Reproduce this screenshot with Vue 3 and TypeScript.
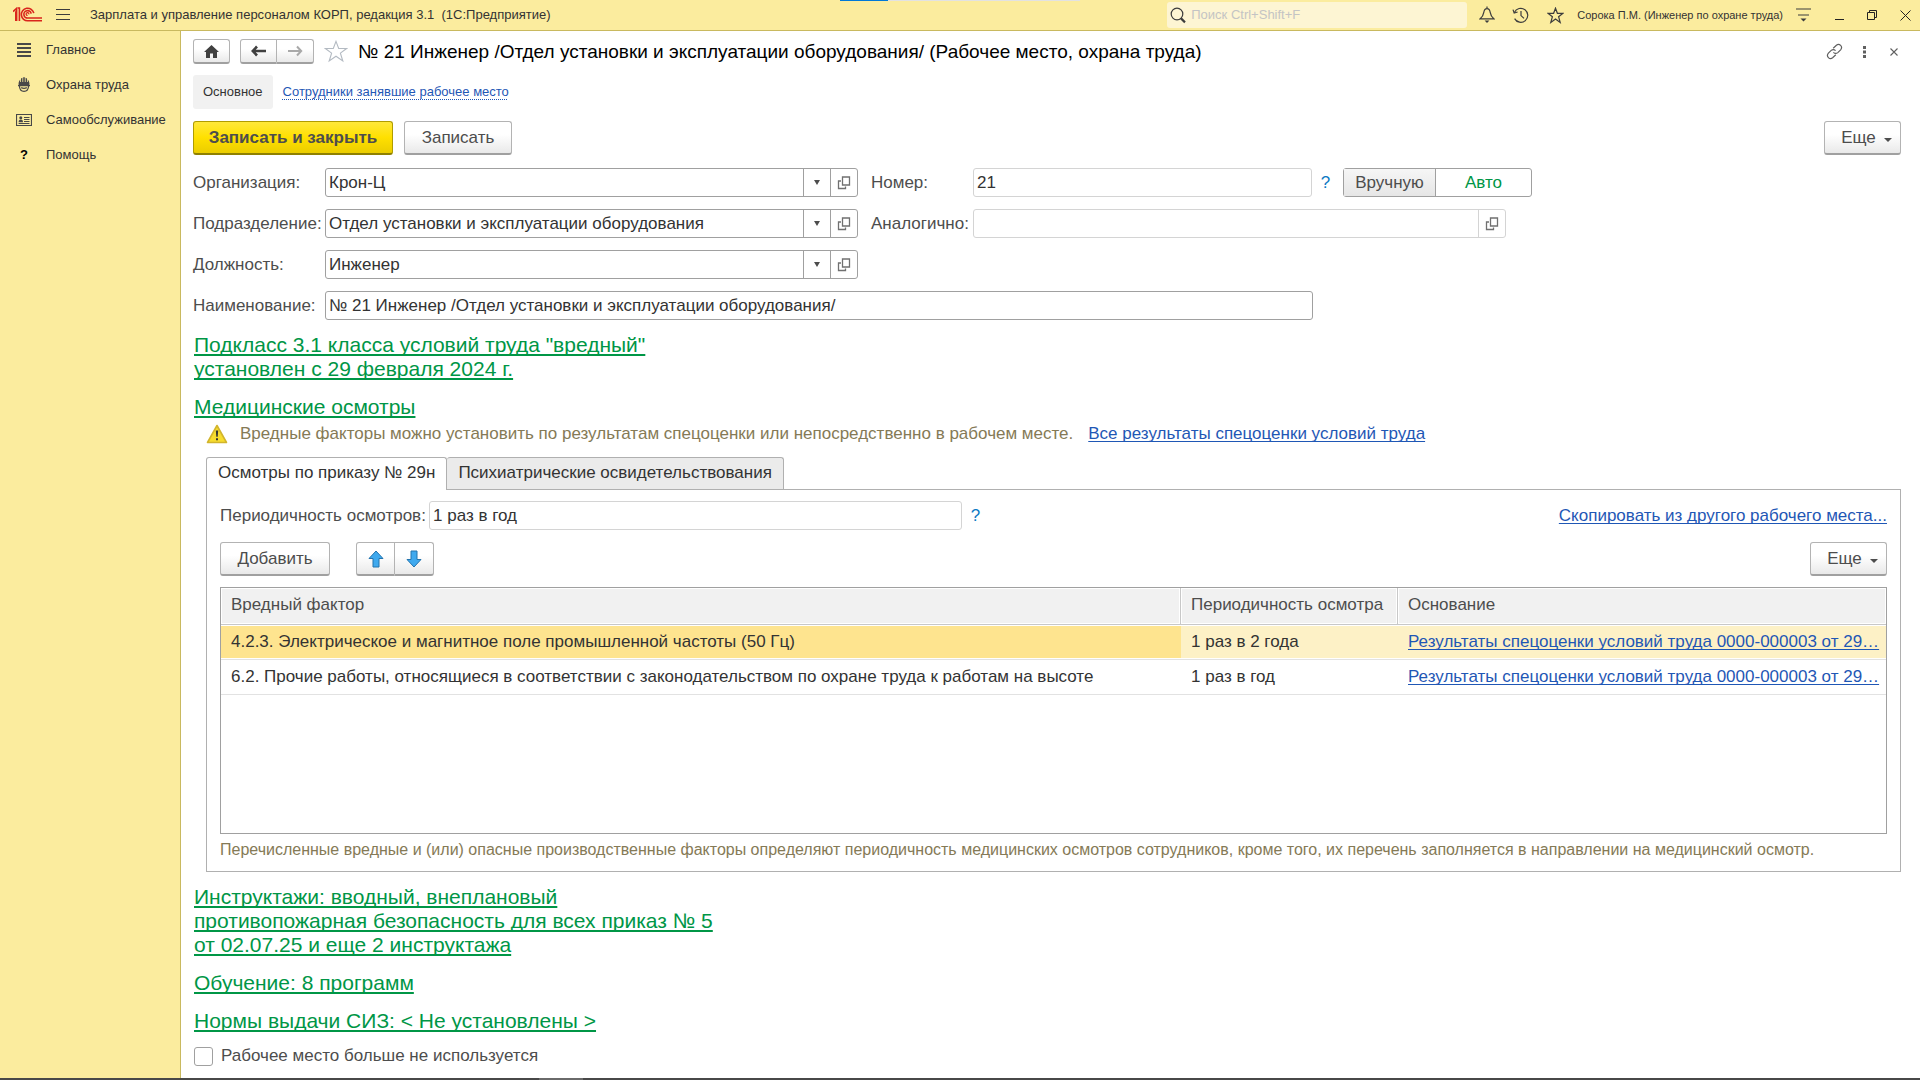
<script setup lang="ts">
import { ref } from 'vue'

interface MenuItem {
  icon: 'list' | 'helmet' | 'card' | 'help'
  title: string
}

interface PickField {
  id: string
  label: string
  value: string
}

interface FactorRow {
  factor: string
  period: string
  basis: string
}

const menu: MenuItem[] = [
  { icon: 'list', title: 'Главное' },
  { icon: 'helmet', title: 'Охрана труда' },
  { icon: 'card', title: 'Самообслуживание' },
  { icon: 'help', title: 'Помощь' },
]

const organization = ref<PickField>({ id: 'org', label: 'Организация:', value: 'Крон-Ц' })
const department = ref<PickField>({ id: 'dep', label: 'Подразделение:', value: 'Отдел установки и эксплуатации оборудования' })
const position = ref<PickField>({ id: 'pos', label: 'Должность:', value: 'Инженер' })
const pickFields = [organization, department, position]

const placeNumber = ref('21')
const sameAs = ref('')
const placeName = ref('№ 21 Инженер /Отдел установки и эксплуатации оборудования/')
const checkPeriod = ref('1 раз в год')
const retired = ref(false)
const selectedRow = ref(0)

const rows: FactorRow[] = [
  {
    factor: '4.2.3. Электрическое и магнитное поле промышленной частоты (50 Гц)',
    period: '1 раз в 2 года',
    basis: 'Результаты спецоценки условий труда 0000-000003 от 29…',
  },
  {
    factor: '6.2. Прочие работы, относящиеся в соответствии с законодательством по охране труда к работам на высоте',
    period: '1 раз в год',
    basis: 'Результаты спецоценки условий труда 0000-000003 от 29…',
  },
]
</script>

<template>
  <div class="app">
    <header class="topbar">
      <div class="progress"><span></span></div>
      <svg class="logo" width="30" height="16" viewBox="0 0 30 16" fill="none" stroke="#d9251c" stroke-width="1.6">
        <path d="M0 4.6 L3.6 1.4 V14 M2 5 H2.8 V14 M6.4 14 V1 H4.8" />
        <path d="M20.8 6.2 A6.3 6.3 0 1 0 15 13.8 H29" />
        <path d="M18.2 6.6 A3.7 3.7 0 1 0 15 11 H29" />
        <path d="M15.8 7.4 A1.4 1.4 0 1 0 14.6 8.4" stroke-width="1.2" />
      </svg>
      <button class="plain burger" aria-label="Меню">
        <svg width="14" height="12" viewBox="0 0 14 12" stroke="#3c3c3c" stroke-width="1"><path d="M0 .5H14M0 5.5H14M0 10.5H14" /></svg>
      </button>
      <span class="app-title">Зарплата и управление персоналом КОРП, редакция 3.1&nbsp; (1С:Предприятие)</span>
      <label class="search">
        <svg width="17" height="17" viewBox="0 0 17 17" fill="none" stroke="#3c3c3c"><circle cx="7" cy="7" r="5.8" stroke-width="1.2" /><path d="M11 11.4L15 15.4" stroke-width="2.2" /></svg>
        <input type="text" placeholder="Поиск Ctrl+Shift+F" aria-label="Поиск" />
      </label>
      <div class="top-tools">
        <button class="plain" aria-label="Уведомления">
          <svg width="16" height="18" viewBox="0 0 16 18" fill="none" stroke="#3c3c3c" stroke-width="1.2"><path d="M1.2 12.8C3.8 10.6 4.4 9 4.8 6.4C5.2 3.8 6.4 2.6 8 2.6S10.8 3.8 11.2 6.4C11.6 9 12.2 10.6 14.8 12.8Z M8 .6V2.6" /><path d="M5.6 14.6H10.4L8 17Z" fill="#3c3c3c" stroke="none" /></svg>
        </button>
        <button class="plain" aria-label="История">
          <svg width="18" height="17" viewBox="0 0 18 17" fill="none" stroke="#3c3c3c" stroke-width="1.2"><path d="M2.4 5.4A7 7 0 1 1 2.6 11.6" /><path d="M1 2.6L2.2 6L5.6 5" /><path d="M9 4V8.6L12 11.4" /></svg>
        </button>
        <button class="plain" aria-label="Избранное">
          <svg width="17" height="17" viewBox="0 0 17 17" fill="none" stroke="#3c3c3c" stroke-width="1.2"><path d="M8.5 1.2L10.4 6.3H16L11.6 9.7L13.2 15.4L8.5 12L3.8 15.4L5.4 9.7L1 6.3H6.6Z" /></svg>
        </button>
        <span class="user">Сорока П.М. (Инженер по охране труда)</span>
        <button class="plain" aria-label="Настройки">
          <svg width="15" height="14" viewBox="0 0 15 14"><path d="M0 1H15M2 7H13" stroke="#3c3c3c" stroke-width="1.2" /><path d="M4.5 10.5H10.5L7.5 13.5Z" fill="#3c3c3c" /></svg>
        </button>
        <button class="plain" aria-label="Свернуть">
          <svg width="10" height="12" viewBox="0 0 10 12"><path d="M1 10.5H10" stroke="#222" /></svg>
        </button>
        <button class="plain" aria-label="Развернуть">
          <svg width="10" height="10" viewBox="0 0 10 10" fill="none" stroke="#222"><path d="M.5 2.5H7.5V9.5H.5ZM2.5 2.5V.5H9.5V7.5H7.5" /></svg>
        </button>
        <button class="plain" aria-label="Закрыть программу">
          <svg width="11" height="11" viewBox="0 0 11 11" stroke="#222"><path d="M.5 .5L10.5 10.5M10.5 .5L.5 10.5" /></svg>
        </button>
      </div>
    </header>

    <div class="body">
      <nav class="sidebar">
        <a v-for="item in menu" :key="item.title" href="#" class="menu-item">
          <svg v-if="item.icon === 'list'" width="16" height="16" viewBox="0 0 16 16"><path d="M1 2H15M1 6H15M1 10H15M1 14H15" stroke="#484848" stroke-width="2" /></svg>
          <svg v-else-if="item.icon === 'helmet'" width="16" height="16" viewBox="0 0 16 16"><path d="M2.6 8.2V6A6 6 0 0 1 4.2 2.4V5H5V1.6L6.4 .8V5H7.2V.2H8.8V5H9.6V.8L11 1.6V5H11.8V2.4A6 6 0 0 1 13.4 6V8.2Z" fill="#484848" /><path d="M3.4 8.8Q3.6 14.4 8 14.4T12.6 8.8M2 8.6H14M5.2 10.6Q8 12 10.8 10.6" fill="none" stroke="#484848" stroke-width="1.2" /></svg>
          <svg v-else-if="item.icon === 'card'" width="16" height="16" viewBox="0 0 16 16"><path d="M.5 2.5H15.5V13.5H.5Z" fill="none" stroke="#484848" stroke-width="1.2" /><circle cx="4.8" cy="5.8" r="1.5" fill="#484848" /><path d="M2.6 10.2Q2.6 7.4 4.8 7.4T7 10.2Z" fill="#484848" /><path d="M8 5.5H13.5M8 7.5H13.5M8 9.5H13.5M2.6 11.5H13.5" stroke="#484848" /></svg>
          <span v-else class="help-icon">?</span>
          <span>{{ item.title }}</span>
        </a>
      </nav>

      <main class="page">
        <div class="nav-row">
          <button class="btn nav-btn" aria-label="Начальная страница">
            <svg width="15" height="13" viewBox="0 0 15 13"><path d="M7.5 0L15 7H13V13H9V8.5H6V13H2V7H0Z" fill="#404040" /></svg>
          </button>
          <div class="btn-pair nav-pair">
            <button class="btn" aria-label="Назад">
              <svg width="15" height="12" viewBox="0 0 15 12"><path d="M6 1.5L1.8 6L6 10.5M2 6H15" fill="none" stroke="#404040" stroke-width="2.6" /></svg>
            </button>
            <button class="btn" aria-label="Вперед">
              <svg width="15" height="12" viewBox="0 0 15 12"><path d="M9 1.5L13.2 6L9 10.5M13 6H0" fill="none" stroke="#a9a9a9" stroke-width="2" /></svg>
            </button>
          </div>
          <button class="plain fav" aria-label="В избранное">
            <svg width="24" height="23" viewBox="0 0 24 23" fill="none" stroke="#b3bac2" stroke-width="1.1"><path d="M12 1.4L14.7 8.5H22.6L16.4 13.1L18.8 21L12 16.2L5.2 21L7.6 13.1L1.4 8.5H9.3Z" /></svg>
          </button>
          <h1>№ 21 Инженер /Отдел установки и эксплуатации оборудования/ (Рабочее место, охрана труда)</h1>
          <div class="page-tools">
            <button class="plain" aria-label="Получить ссылку">
              <svg width="17" height="17" viewBox="0 0 17 17" fill="none" stroke="#606060" stroke-width="1.2"><path d="M7.2 5.2L10.4 2.2Q12.6 .4 14.6 2.4T14.6 6.8L11.8 9.6Q9.6 11.4 7.4 9.4" /><path d="M9.8 11.8L6.6 14.8Q4.4 16.6 2.4 14.6T2.4 10.2L5.2 7.4Q7.4 5.6 9.6 7.6" /></svg>
            </button>
            <button class="plain" aria-label="Еще действия">
              <svg width="3" height="12" viewBox="0 0 3 12" fill="#606060"><path d="M0 0H3V3H0ZM0 4.5H3V7.5H0ZM0 9H3V12H0Z" /></svg>
            </button>
            <button class="plain" aria-label="Закрыть">
              <svg width="8" height="8" viewBox="0 0 8 8" stroke="#606060" stroke-width="1.1"><path d="M.5 .5L7.5 7.5M7.5 .5L.5 7.5" /></svg>
            </button>
          </div>
        </div>

        <div class="sections">
          <a href="#" class="section-current">Основное</a>
          <a href="#" class="section-link">Сотрудники занявшие рабочее место</a>
        </div>

        <div class="commands">
          <button class="btn primary">Записать и закрыть</button>
          <button class="btn save">Записать</button>
          <button class="btn more">Еще <i class="caret"></i></button>
        </div>

        <div class="form">
          <div class="col-left">
            <div v-for="field in pickFields" :key="field.value.id" class="field-row">
              <label :for="field.value.id">{{ field.value.label }}</label>
              <div class="field pick">
                <input :id="field.value.id" v-model="field.value.value" type="text" />
                <button aria-label="Выбрать из списка"><i class="caret"></i></button>
                <button aria-label="Открыть">
                  <svg width="14" height="14" viewBox="0 0 14 14" fill="none" stroke="#707070" stroke-width="1.3"><path d="M5.5 1H12.5V9H5.5ZM4 5H1.5V12.5H8.5V10.5" /></svg>
                </button>
              </div>
            </div>
          </div>
          <div class="col-right">
            <div class="field-row">
              <label for="num">Номер:</label>
              <div class="field soft number"><input id="num" v-model="placeNumber" type="text" /></div>
              <button class="plain hint" aria-label="Подсказка к номеру">?</button>
              <div class="toggle">
                <button class="manual">Вручную</button>
                <button class="auto">Авто</button>
              </div>
            </div>
            <div class="field-row">
              <label for="same">Аналогично:</label>
              <div class="field soft pick">
                <input id="same" v-model="sameAs" type="text" />
                <button aria-label="Открыть">
                  <svg width="14" height="14" viewBox="0 0 14 14" fill="none" stroke="#707070" stroke-width="1.3"><path d="M5.5 1H12.5V9H5.5ZM4 5H1.5V12.5H8.5V10.5" /></svg>
                </button>
              </div>
            </div>
          </div>
        </div>
        <div class="field-row name-row">
          <label for="name">Наименование:</label>
          <div class="field name"><input id="name" v-model="placeName" type="text" /></div>
        </div>

        <a href="#" class="group-link">Подкласс 3.1 класса условий труда "вредный"<br />установлен с 29 февраля 2024 г.</a>
        <a href="#" class="group-link">Медицинские осмотры</a>

        <section class="medical">
          <div class="notice">
            <svg width="22" height="20" viewBox="0 0 22 20"><path d="M11 1.5L20.5 18.5H1.5Z" fill="#f7dc2e" stroke="#d2b52c" stroke-width="1.6" stroke-linejoin="round" /><path d="M9.8 6.5H12.2L11.7 12.8H10.3ZM10 14.2H12V16.2H10Z" fill="#333" /></svg>
            <span>Вредные факторы можно установить по результатам спецоценки или непосредственно в рабочем месте.</span>
            <a href="#" class="link">Все результаты спецоценки условий труда</a>
          </div>

          <div class="tabs">
            <button class="tab active">Осмотры по приказу № 29н</button>
            <button class="tab">Психиатрические освидетельствования</button>
          </div>

          <div class="panel">
            <div class="field-row period-row">
              <label for="period">Периодичность осмотров:</label>
              <div class="field soft period"><input id="period" v-model="checkPeriod" type="text" /></div>
              <button class="plain hint" aria-label="Подсказка к периодичности">?</button>
              <a href="#" class="link copy">Скопировать из другого рабочего места...</a>
            </div>

            <div class="table-commands">
              <button class="btn add">Добавить</button>
              <div class="btn-pair move-pair">
                <button class="btn" aria-label="Переместить вверх">
                  <svg width="16" height="18" viewBox="0 0 16 18"><path d="M8 1L15 8.5H11V17H5V8.5H1Z" fill="#3fa9ee" stroke="#2374ae" stroke-linejoin="round" /></svg>
                </button>
                <button class="btn" aria-label="Переместить вниз">
                  <svg width="16" height="18" viewBox="0 0 16 18"><path d="M8 17L1 9.5H5V1H11V9.5H15Z" fill="#3fa9ee" stroke="#2374ae" stroke-linejoin="round" /></svg>
                </button>
              </div>
              <button class="btn more">Еще <i class="caret"></i></button>
            </div>

            <div class="table-box">
              <table>
                <colgroup>
                  <col />
                  <col class="c-period" />
                  <col class="c-basis" />
                </colgroup>
                <thead>
                  <tr>
                    <th>Вредный фактор</th>
                    <th>Периодичность осмотра</th>
                    <th>Основание</th>
                  </tr>
                </thead>
                <tbody>
                  <tr v-for="(row, i) in rows" :key="row.factor" :class="{ selected: i === selectedRow }" @click="selectedRow = i">
                    <td>{{ row.factor }}</td>
                    <td>{{ row.period }}</td>
                    <td><a href="#" class="link">{{ row.basis }}</a></td>
                  </tr>
                </tbody>
              </table>
            </div>
            <p class="note">Перечисленные вредные и (или) опасные производственные факторы определяют периодичность медицинских осмотров сотрудников, кроме того, их перечень заполняется в направлении на медицинский осмотр.</p>
          </div>
        </section>

        <a href="#" class="group-link">Инструктажи: вводный, внеплановый<br />противопожарная безопасность для всех приказ № 5<br />от 02.07.25 и еще 2 инструктажа</a>
        <a href="#" class="group-link">Обучение: 8 программ</a>
        <a href="#" class="group-link">Нормы выдачи СИЗ: &lt; Не установлены &gt;</a>

        <label class="retired">
          <input v-model="retired" type="checkbox" />
          <span>Рабочее место больше не используется</span>
        </label>
      </main>
    </div>
    <footer class="bottom-strip"><span></span></footer>
  </div>
</template>

<style>
body {
  margin: 0;
}
</style>

<style scoped>
.app {
  display: flex;
  flex-direction: column;
  min-height: 100vh;
  background: #fff;
  color: #333;
  font-family: "Liberation Sans", Arial, sans-serif;
  font-size: 17px;
  line-height: 20px;
}
.app *,
.app {
  box-sizing: border-box;
}
button,
input {
  font: inherit;
  color: inherit;
  margin: 0;
  padding: 0;
}
button {
  display: flex;
  align-items: center;
  justify-content: center;
  flex: none;
}
svg {
  display: block;
  flex: none;
}
.plain {
  border: 0;
  background: none;
}

/* Top bar */
.topbar {
  position: relative;
  display: flex;
  align-items: center;
  height: 31px;
  padding: 0 9px 0 13px;
  background: #fbec9e;
  border-bottom: 1px solid #c9b95f;
  font-size: 13px;
}
.progress {
  position: absolute;
  top: 0;
  left: 840px;
  width: 240px;
  height: 1px;
  background: #e2e2e2;
}
.progress span {
  display: block;
  width: 48px;
  height: 1px;
  background: #0078d7;
}
.burger {
  margin-left: 13px;
}
.app-title {
  margin-left: 20px;
  white-space: nowrap;
}
.search {
  display: flex;
  align-items: center;
  gap: 4px;
  width: 300px;
  height: 26px;
  margin-left: auto;
  padding-left: 3px;
  border-radius: 3px;
  background: #fdf5d3;
}
.search input {
  flex: 1;
  min-width: 0;
  border: 0;
  outline: 0;
  background: none;
}
.search input::placeholder {
  color: #c4c4c4;
  opacity: 1;
}
.top-tools {
  display: flex;
  align-items: center;
  gap: 17px;
  margin-left: 12px;
}
.user {
  margin: 0 -4px;
  font-size: 11px;
  white-space: nowrap;
}
.top-tools .user + button {
  margin-right: 6px;
}
.top-tools button:nth-last-child(-n + 2) {
  margin-left: 6px;
}

/* Sidebar */
.body {
  display: flex;
  flex: 1;
}
.sidebar {
  flex: none;
  width: 181px;
  padding-top: 1px;
  background: #fbec9e;
  border-right: 1px solid #c9b95f;
}
.menu-item {
  display: flex;
  align-items: center;
  gap: 14px;
  height: 35px;
  padding-left: 16px;
  color: #333;
  font-size: 13px;
  text-decoration: none;
}
.help-icon {
  width: 16px;
  color: #000;
  font-weight: bold;
  text-align: center;
}

/* Page */
.page {
  flex: 1;
  min-width: 0;
  padding: 8px 19px 0 12px;
}
.btn {
  height: 34px;
  border: 1px solid #b3b3b3;
  border-bottom: 2px solid #a0a0a0;
  border-radius: 3px;
  background: linear-gradient(#fff 40%, #e9e9e9);
  color: #4d4d4d;
}
.btn-pair {
  display: flex;
}
.btn-pair .btn:first-child {
  border-radius: 3px 0 0 3px;
}
.btn-pair .btn:last-child {
  border-left: 0;
  border-radius: 0 3px 3px 0;
}
.nav-row {
  display: flex;
  align-items: center;
  height: 25px;
}
.nav-btn,
.nav-pair .btn {
  width: 37px;
  height: 25px;
}
.nav-pair {
  margin-left: 10px;
}
.fav {
  margin-left: 10px;
}
h1 {
  margin: 0 0 0 10px;
  color: #000;
  font-size: 19px;
  font-weight: normal;
  white-space: nowrap;
}
.page-tools {
  display: flex;
  align-items: center;
  margin: 0 -8px 0 auto;
}
.page-tools button {
  width: 30px;
}
.sections {
  display: flex;
  align-items: center;
  gap: 10px;
  margin-top: 11px;
  font-size: 13px;
}
.section-current {
  padding: 7px 10px;
  border-radius: 3px;
  background: #f1f1f1;
  color: #333;
  text-decoration: none;
}
.section-link {
  color: #1f57b5;
  text-decoration: underline dotted 1px;
  text-underline-offset: 3px;
  text-decoration-skip-ink: none;
}
.commands,
.table-commands {
  display: flex;
}
.commands {
  gap: 11px;
  margin-top: 12px;
}
.primary {
  width: 200px;
  border-color: #b09c00;
  border-bottom-color: #8f8000;
  background: linear-gradient(#ffe83a, #ffe000 50%, #ebcd00);
  font-weight: bold;
}
.save {
  width: 108px;
}
.more {
  gap: 8px;
  width: 77px;
  margin-left: auto;
  padding-left: 8px;
}
.caret {
  width: 0;
  height: 0;
  border: 4px solid transparent;
  border-top-color: #4d4d4d;
  border-bottom: 0;
}
.more .caret {
  margin-top: 4px;
}

/* Form fields */
.form {
  display: flex;
  gap: 13px;
  margin-top: 13px;
}
.col-left,
.col-right {
  display: flex;
  flex-direction: column;
  gap: 12px;
}
.field-row {
  display: flex;
  align-items: center;
  height: 29px;
}
.field-row label {
  flex: none;
  color: #4d4d4d;
  white-space: nowrap;
}
.col-left label,
.name-row label {
  width: 132px;
}
.col-right label {
  width: 102px;
}
.field {
  display: flex;
  height: 29px;
  border: 1px solid #a0a0a0;
  border-radius: 3px;
}
.field input {
  flex: 1;
  min-width: 0;
  padding: 0 3px;
  border: 0;
  outline: 0;
  background: none;
}
.field button {
  width: 27px;
  border: 0;
  border-left: 1px solid #a0a0a0;
  background: none;
}
.soft,
.soft button {
  border-color: #d4d4d4;
}
.pick {
  width: 533px;
}
.pick .caret {
  border-width: 5px 3px 0;
}
.number {
  width: 339px;
}
.name-row {
  margin-top: 12px;
}
.name {
  width: 988px;
}
.hint {
  width: 27px;
  color: #0d79c4;
}
.toggle {
  display: flex;
  height: 29px;
  margin-left: 4px;
  border: 1px solid #a0a0a0;
  border-radius: 3px;
}
.toggle button {
  border: 0;
}
.toggle .manual {
  width: 92px;
  border-right: 1px solid #a0a0a0;
  background: linear-gradient(#f6f6f6, #e6e6e6);
  color: #4d4d4d;
}
.toggle .auto {
  width: 95px;
  background: none;
  color: #009646;
}

/* Group links */
.group-link {
  display: block;
  width: fit-content;
  margin: 14px 0 0 1px;
  color: #009646;
  font-size: 21px;
  line-height: 24px;
  text-decoration: underline 2px;
  text-underline-offset: 2px;
  text-decoration-skip-ink: none;
}
.name-row + .group-link,
.medical + .group-link {
  margin-top: 13px;
}
.link {
  color: #1f57b5;
  text-decoration: underline 1px;
  text-underline-offset: 2px;
  text-decoration-skip-ink: none;
  white-space: nowrap;
}

/* Medical checks */
.medical {
  margin-left: 13px;
}
.notice {
  display: flex;
  align-items: center;
  height: 30px;
  color: #857a56;
  white-space: nowrap;
}
.notice span {
  margin: 0 15px 0 12px;
}
.tabs {
  display: flex;
  height: 33px;
  margin-top: 8px;
}
.tab {
  position: relative;
  height: 32px;
  padding: 0 11px 2px;
  border: 1px solid #b0b0b0;
  border-left: 0;
  border-bottom: 0;
  border-radius: 3px 3px 0 0;
  background: #ebebeb;
}
.tab.active {
  z-index: 1;
  height: 33px;
  border-left: 1px solid #b0b0b0;
  background: #fff;
}
.panel {
  margin-top: -1px;
  padding: 11px 13px 11px;
  border: 1px solid #b0b0b0;
}
.period-row label {
  width: 209px;
}
.period {
  width: 533px;
}
.copy {
  margin-left: auto;
}
.table-commands {
  margin-top: 12px;
}
.add {
  width: 110px;
}
.move-pair {
  margin-left: 26px;
}
.move-pair .btn {
  width: 39px;
}
.table-box {
  height: 247px;
  margin-top: 11px;
  border: 1px solid #a0a0a0;
}
table {
  width: 100%;
  border-spacing: 0;
  table-layout: fixed;
}
.c-period {
  width: 217px;
}
.c-basis {
  width: 488px;
}
th,
td {
  height: 35px;
  padding: 0 10px;
  overflow: hidden;
  text-align: left;
  white-space: nowrap;
}
th {
  height: 37px;
  padding-bottom: 2px;
  border-right: 1px solid #c8c8c8;
  border-bottom: 1px solid #c8c8c8;
  background: #f1f1f1;
  box-shadow: inset 0 0 0 1px #fff;
  color: #4d4d4d;
  font-weight: normal;
}
th:last-child {
  border-right: 0;
}
td {
  border-bottom: 1px solid #e2e2e2;
  box-shadow: inset 0 1px #fff, inset 0 -1px #fff;
}
.selected td {
  background: #fdf1c6;
}
.selected td:first-child {
  background: #fee48f;
}
.note {
  margin: 6px 0 0;
  color: #857a56;
  font-size: 16px;
  white-space: nowrap;
}
.retired {
  display: flex;
  align-items: center;
  gap: 8px;
  width: fit-content;
  margin: 13px 0 0 1px;
  color: #4d4d4d;
}
.retired input {
  width: 19px;
  height: 19px;
  border: 1px solid #a0a0a0;
  border-radius: 3px;
  background: #fff;
  appearance: none;
}
.retired input:checked {
  background: #009646;
}
.bottom-strip {
  height: 2px;
  padding-left: 539px;
  background: #484848;
}
.bottom-strip span {
  display: block;
  width: 44px;
  height: 2px;
  background: #6a6a6a;
}
</style>
